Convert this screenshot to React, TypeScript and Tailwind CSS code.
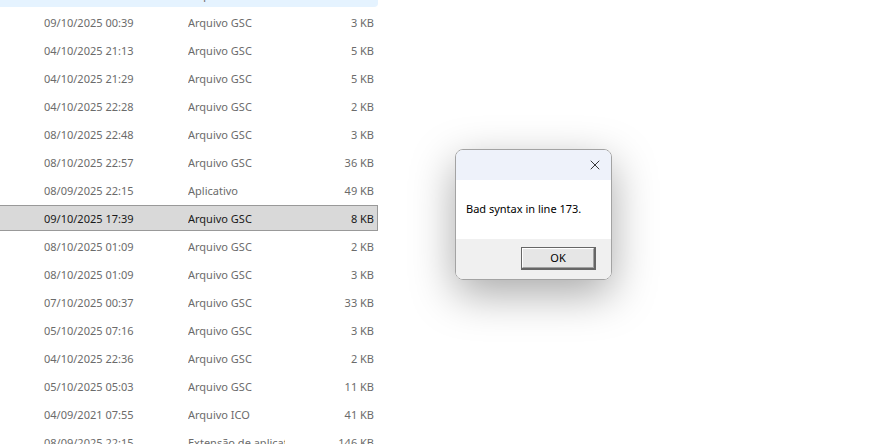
import { X } from "lucide-react";

type Row = { date: string; type: string; size: string };

const rows: Row[] = [
  { date: "09/10/2025 00:12", type: "Arquivo GSC", size: "4 KB" },
  { date: "09/10/2025 00:39", type: "Arquivo GSC", size: "3 KB" },
  { date: "04/10/2025 21:13", type: "Arquivo GSC", size: "5 KB" },
  { date: "04/10/2025 21:29", type: "Arquivo GSC", size: "5 KB" },
  { date: "04/10/2025 22:28", type: "Arquivo GSC", size: "2 KB" },
  { date: "08/10/2025 22:48", type: "Arquivo GSC", size: "3 KB" },
  { date: "08/10/2025 22:57", type: "Arquivo GSC", size: "36 KB" },
  { date: "08/09/2025 22:15", type: "Aplicativo", size: "49 KB" },
  { date: "09/10/2025 17:39", type: "Arquivo GSC", size: "8 KB" },
  { date: "08/10/2025 01:09", type: "Arquivo GSC", size: "2 KB" },
  { date: "08/10/2025 01:09", type: "Arquivo GSC", size: "3 KB" },
  { date: "07/10/2025 00:37", type: "Arquivo GSC", size: "33 KB" },
  { date: "05/10/2025 07:16", type: "Arquivo GSC", size: "3 KB" },
  { date: "04/10/2025 22:36", type: "Arquivo GSC", size: "2 KB" },
  { date: "05/10/2025 05:03", type: "Arquivo GSC", size: "11 KB" },
  { date: "04/09/2021 07:55", type: "Arquivo ICO", size: "41 KB" },
  { date: "08/09/2025 22:15", type: "Extensão de aplicativo", size: "146 KB" },
];

const FileRow = ({ row, state }: { row: Row; state: "hover" | "selected" | "none" }) => {
  const box =
    state === "selected"
      ? "bg-[#d9d9d9] border border-[#999999] text-[#1a1a1a]"
      : state === "hover"
        ? "bg-[#e5f3ff] border border-transparent rounded-br-[4px] text-[#6b6b6b]"
        : "border border-transparent text-[#6b6b6b]";
  return (
    <div className={`flex items-center h-[26px] w-[379px] ml-[-1px] shrink-0 pt-[2px] ${box}`}>
      <span className="w-[188px] shrink-0 pl-[44px] whitespace-nowrap">{row.date}</span>
      <span className="w-[97px] shrink-0 whitespace-nowrap overflow-hidden">{row.type}</span>
      <span className="flex-1 text-right pr-[3px] whitespace-nowrap">{row.size}</span>
    </div>
  );
};

export default function App() {
  return (
    <div
      className="relative w-[888px] h-[444px] overflow-hidden bg-white text-[11px]"
      style={{ fontFamily: '"Segoe UI", "Noto Sans", sans-serif' }}
    >
      <div className="flex flex-col gap-[2px] mt-[-19px]">
        {rows.map((r, i) => (
          <FileRow key={i} row={r} state={i === 0 ? "hover" : i === 8 ? "selected" : "none"} />
        ))}
      </div>

      {/* message box */}
      <div className="absolute left-[455px] top-[149px] w-[157px] h-[131px] flex flex-col rounded-[8px] border border-[#a3a3a3] overflow-hidden shadow-[0_14px_44px_rgba(0,0,0,0.34)]">
        <div className="h-[30px] bg-[#eef2fa] flex items-center justify-end pr-[8px]">
          <X size={16} strokeWidth={1.3} className="text-[#1a1a1a]" />
        </div>
        <div className="h-[59px] bg-white flex items-center pl-[10px] text-black">
          Bad syntax in line 173.
        </div>
        <div className="flex-1 bg-[#f0f0f0] flex justify-end items-start pt-[8px] pr-[15px]">
          <div className="w-[75px] h-[23px] border border-[#666666] border-r-2 border-b-2 flex">
            <div className="flex-1 bg-[#e6e6e6] border border-white border-r-[#a0a0a0] border-b-[#a0a0a0] flex items-center justify-center text-black">
              OK
            </div>
          </div>
        </div>
      </div>
    </div>
  );
}
